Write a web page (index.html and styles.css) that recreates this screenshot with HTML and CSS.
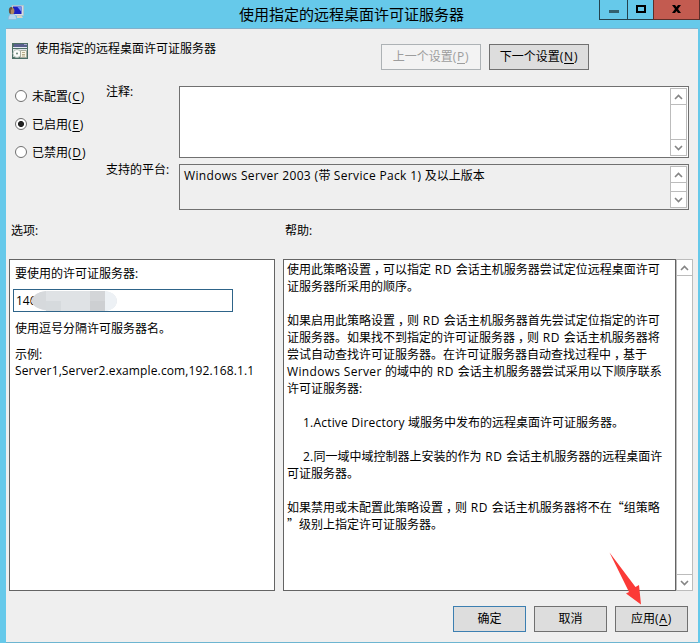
FILE: index.html
```
<!DOCTYPE html>
<html lang="zh-CN">
<head>
<meta charset="utf-8">
<title>使用指定的远程桌面许可证服务器</title>
<link rel="stylesheet" href="styles.css">
</head>
<body>
<div class="window">
  <header class="titlebar">
    <svg class="app-icon" width="16" height="16" viewBox="0 0 16 16">
      <path d="M9 10h4l2 3H9z" fill="#d8d3c4"/>
      <rect x="4" y=".5" width="11.500" height="10" fill="#d9dde0" stroke="#b4bfc6" stroke-width=".7"/>
      <rect x="5" y="1.500" width="8.500" height="7.500" fill="#1a1fc0"/>
      <path d="M9 1.500h4.500V7z" fill="#6f93f0"/>
      <path d="M.3 14.500c0-4 1.700-5.500 4-5.500s4.200 1.500 4.200 5.500z" fill="#b4d6ee" stroke="#86b2d3" stroke-width=".6"/>
      <ellipse cx="4" cy="6" rx="2.400" ry="3.300" fill="#b0855c"/>
      <path d="M1 7C.3 3 2 1.500 4.500 2.200L4 4 3 5v4C2 9 1 8 1 7z" fill="#6b5442"/>
    </svg>
    <h1 class="title">使用指定的远程桌面许可证服务器</h1>
    <div class="caption">
      <span class="cap min"><svg width="10" height="3"><rect width="10" height="3" fill="#33616f"/></svg></span>
      <span class="cap max"><svg width="10" height="8"><rect x="1" y="1" width="8" height="6" fill="none" stroke="#000" stroke-width="2"/></svg></span>
      <span class="cap close"><svg width="9" height="8" viewBox="0 0 9 8"><path d="M0 0h3l1.500 2L6 0h3L6 4l3 4H6L4.500 6 3 8H0l3-4z" fill="#000"/></svg></span>
    </div>
  </header>

  <main class="dialog">
    <section class="head">
      <svg class="policy-icon" width="16" height="16" viewBox="0 0 16 16">
        <rect width="16" height="16" fill="#4d6f66"/>
        <rect x="2" y="1" width="13" height="3" fill="#5a608e"/>
        <rect x="12" y="1" width="3" height="1" fill="#a9aed0"/>
        <rect x="1" y="4" width="14" height="1" fill="#e4e9f2"/>
        <rect x="1" y="6" width="14" height="2" fill="#e2e8ec"/>
        <rect x="1" y="8" width="14" height="6" fill="#c6d3cc"/>
        <circle cx="5" cy="10.500" r="4" fill="#fbfcfa" stroke="#b4c2bb"/>
        <circle cx="5" cy="10.500" r="1" fill="#688377"/>
        <path d="M8.500 7.500h6v7h-6z" fill="#f8f5e6" stroke="#a9ada0"/>
        <path d="M10 9.500h3M10 11.500h3M10 13h3" stroke="#a89c74" stroke-width=".8"/>
      </svg>
      <span class="policy-name">使用指定的远程桌面许可证服务器</span>
      <button class="btn nav disabled" disabled>上一个设置<kbd>(<u>P</u>)</kbd></button>
      <button class="btn nav">下一个设置<kbd>(<u>N</u>)</kbd></button>
    </section>

    <section class="state">
      <div class="radios">
        <label class="radio"><i class="dot"></i>未配置<kbd>(<u>C</u>)</kbd></label>
        <label class="radio"><i class="dot on"></i>已启用<kbd>(<u>E</u>)</kbd></label>
        <label class="radio"><i class="dot"></i>已禁用<kbd>(<u>D</u>)</kbd></label>
      </div>
      <div class="fields">
        <span class="field-name">注释:</span>
        <div class="area comment">
          <div class="area-text"></div>
          <div class="scroll"><span class="arrow"><svg width="9" height="6"><path d="M1 5l3.500-3.500L8 5"/></svg></span><span class="arrow"><svg width="9" height="6"><path d="M1 1l3.500 3.500L8 1"/></svg></span></div>
        </div>
        <span class="field-name">支持的平台:</span>
        <div class="area platform">
          <div class="area-text"><span class="en-a">Windows Server 2003 (</span>带<span class="en-a"> Service Pack 1) </span>及以上版本</div>
          <div class="scroll"><span class="arrow"><svg width="9" height="6"><path d="M1 5l3.500-3.500L8 5"/></svg></span><span class="arrow"><svg width="9" height="6"><path d="M1 1l3.500 3.500L8 1"/></svg></span></div>
        </div>
      </div>
    </section>

    <section class="panes">
      <h2 class="pane-name">选项:</h2>
      <h2 class="pane-name">帮助:</h2>
      <div class="options">
        <p class="opt-label">要使用的许可证服务器:</p>
        <div class="server-input"><span>146</span><svg width="87" height="20" viewBox="0 0 87 20">
          <path d="M0 10Q3 1 16 0H72Q85 1 86 10 85 19 72 20H18Q3 18 0 10z" fill="#dfe2e5"/>
          <path d="M0 10Q3 1 15 0V19Q3 18 0 10z" fill="#d6d9dc"/>
          <rect x="15" y="10" width="15" height="10" fill="#d6dadd"/>
          <rect x="59" width="15" height="10" fill="#d3d5d8"/>
          <rect x="59" y="10" width="15" height="10" fill="#cdcfd2"/>
          <path d="M74 0Q85 1 86 10 85 19 74 20z" fill="#edf1f5"/>
        </svg></div>
        <p class="opt-hint">使用逗号分隔许可服务器名。</p>
        <p class="opt-example">示例:</p>
        <p class="opt-value">Server1,Server2.example.com,192.168.1.1</p>
      </div>
      <div class="help">
        <div class="help-text">使用此策略设置<i>，</i>可以指定<b> RD </b>会话主机服务器尝试定位远程桌面许可
证服务器所采用的顺序。

如果启用此策略设置<i>，</i>则<b> RD </b>会话主机服务器首先尝试定位指定的许可
证服务器。如果找不到指定的许可证服务器<i>，</i>则<b> RD </b>会话主机服务器将
尝试自动查找许可证服务器。在许可证服务器自动查找过程中<i>，</i>基于
<b class="win">Windows Server </b>的域中的<b> RD </b>会话主机服务器尝试采用以下顺序联系
许可证服务器:

<b class="item">1.Active Directory </b>域服务中发布的远程桌面许可证服务器。

<b class="item">2.</b>同一域中域控制器上安装的作为<b> RD </b>会话主机服务器的远程桌面许
可证服务器。

如果禁用或未配置此策略设置<i>，</i>则<b> RD </b>会话主机服务器将不在<q>“</q>组策略
<q>”</q>级别上指定许可证服务器。</div>
        <div class="scroll"><span class="arrow"><svg width="9" height="6"><path d="M1 5l3.500-3.500L8 5"/></svg></span><span class="arrow"><svg width="9" height="6"><path d="M1 1l3.500 3.500L8 1"/></svg></span></div>
      </div>
    </section>

    <footer class="actions">
      <button class="btn default">确定</button>
      <button class="btn">取消</button>
      <button class="btn">应用<kbd>(<u>A</u>)</kbd></button>
    </footer>
  </main>
  <svg class="pointer" width="34" height="53" viewBox="0 0 34 53"><path d="M.5.5L26.500 35l3.500-2 2 19.500-15-11 3-1.500z" fill="#fb3a37"/></svg>
</div>
</body>
</html>
```
FILE: styles.css
```
* { box-sizing: border-box; }
body {
  margin: 0;
  font: 12px/17px "Open Sans", "Noto Sans CJK SC", sans-serif;
  color: #000;
}
p, h1, h2 { margin: 0; font-size: 12px; font-weight: 400; }
u { text-underline-offset: 2px; }
kbd { font: inherit; letter-spacing: .8px; }
.window {
  position: relative;
  width: 700px;
  height: 643px;
  padding-left: 6px;
  padding-right: 2px;
  background: #66c9ea;
}
.titlebar { display: flex; height: 28px; margin-right: -2px; }
.app-icon { margin: 5px 0 0 2px; }
.title { margin-left: 215px; font-size: 15px; line-height: 28px; white-space: nowrap; }
.caption { display: flex; height: 20px; margin-left: auto; }
.cap { display: flex; justify-content: center; align-items: center; border: 1px solid #24424d; border-top: 0; border-right: 0; padding-bottom: 1px; }
.min { width: 28px; padding-top: 5px; }
.max { width: 26px; }
.close { width: 47px; background: #c35b50; border-color: #5c2e29; border-right: 1px solid #5c2e29; }

.dialog { height: 615px; background: #efefef; border-top: 1px solid #82b0cc; border-bottom: 1px solid #6db5d1; }
.head { display: flex; height: 57px; padding: 15px 0 0 6px; }
.policy-icon { margin: -1px 8px 0 0; }
.policy-name { width: 345px; margin-top: -4px; }
.btn {
  width: 73px;
  height: 26px;
  padding: 0 0 1px;
  border: 1px solid #707070;
  background: #ddd;
  color: #000;
  font: inherit;
}
.nav { width: 100px; margin-right: 8px; }
.disabled { border-color: #adb2b5; background: #f3f3f3; color: #9d9d9d; }
.default { border-color: #3c7fb1; }

.state { display: flex; height: 124px; }
.radios { width: 100px; padding-left: 9px; margin-top: -4px; }
.radio { display: flex; align-items: center; height: 28px; white-space: nowrap; }
.dot { width: 12px; height: 12px; margin: 0 5px 1px 0; border: 1px solid #707070; border-radius: 50%; background: #fff; }
.on { background: radial-gradient(circle, #222 0 2.7px, #fff 3.3px); }
.fields { display: grid; grid-template-columns: 73px 510px; grid-template-rows: 72px 46px; row-gap: 6px; }
.field-name { margin-top: -3px; white-space: nowrap; }
.area { display: flex; border: 1px solid #707070; padding: 1px; }
.comment { background: #fff; }
.area-text { flex: 1; padding: 1px 3px; white-space: pre; }
.scroll { display: flex; flex-direction: column; justify-content: space-between; width: 17px; border: 1px solid #bcbcbc; background: #fff; }
.arrow { display: flex; justify-content: center; align-items: center; height: 16px; border-bottom: 1px solid #bcbcbc; }
.arrow + .arrow { border-bottom: 0; border-top: 1px solid #bcbcbc; }
.arrow path { fill: none; stroke: #858585; stroke-width: 1.6; }
.en-a { letter-spacing: .34px; }

.panes { display: grid; grid-template-columns: 266px 410px; grid-template-rows: 49px 332px; column-gap: 8px; padding-left: 3px; }
.pane-name { padding: 12px 0 0 2px; }
.options { border: 1px solid #646464; background: #fff; padding: 5px 3px; }
.opt-label { padding-left: 2px; }
.server-input { display: flex; width: 220px; height: 23px; margin-top: 7px; padding: 1px 2px; border: 1px solid #2e6489; line-height: 20px; }
.server-input svg { margin-left: -6px; }
.opt-hint { margin-top: 8px; padding-left: 2px; }
.opt-example { margin-top: 9px; padding-left: 2px; }
.opt-value { margin-top: -1px; padding-left: 2px; letter-spacing: .13px; white-space: nowrap; }
.help { display: flex; }
.help-text { width: 393px; border: 1px solid #646464; background: #fff; padding: 1px 0 0 3px; white-space: pre; }
.help b { font-weight: 400; letter-spacing: .6px; }
.help .win { letter-spacing: .33px; }
.help .item { padding-left: 16px; letter-spacing: .2px; }
.help i { padding-left: 3px; margin-right: -3px; font-style: normal; }
q { font-family: "Noto Sans CJK SC", sans-serif; line-height: 0; }
q::before, q::after { content: none; }

.actions { display: flex; justify-content: flex-end; gap: 8px; padding: 15px 10px 0 0; }
.pointer { position: absolute; left: 609px; top: 552px; }
```
